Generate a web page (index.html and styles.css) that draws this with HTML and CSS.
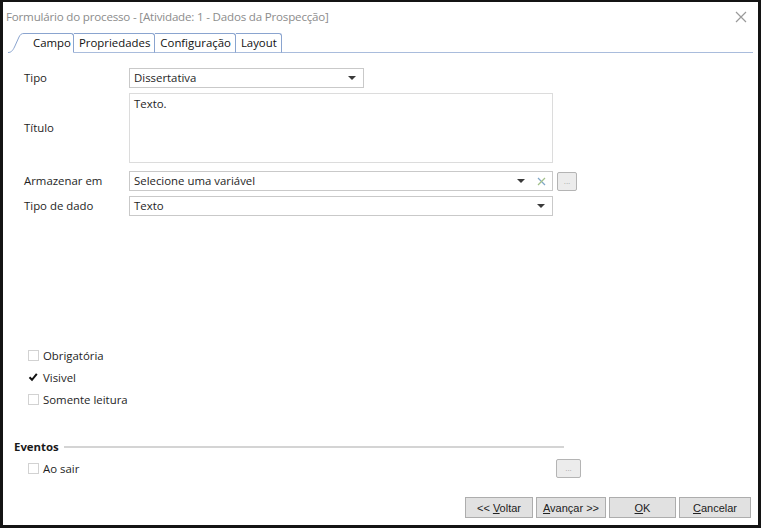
FILE: index.html
```html
<!DOCTYPE html>
<html lang="pt-BR">
<head>
    <meta charset="UTF-8">
    <meta name="viewport" content="width=device-width, initial-scale=1.0">
    <title>Formulário do processo</title>
    <link rel="stylesheet" href="styles.css">
</head>
<body>
    <div class="window">
        <div class="titlebar">
            <span class="title">Formulário do processo - [Atividade: 1 - Dados da Prospecção]</span>
            <svg class="close" width="12" height="12" viewBox="0 0 12 12">
                <path d="M1 1 L11 11 M11 1 L1 11" stroke="#9a9a9a" stroke-width="1.2" fill="none"/>
            </svg>
        </div>

        <div class="tabs">
            <svg class="tab-slant" width="16" height="20" viewBox="0 0 16 20">
                <path d="M0 19.5 C3 19.5 4.5 18 6.5 14 L11 4 C12.5 1.2 13.5 0.5 16 0.5" stroke="#8aa4cf" fill="none"/>
            </svg>
            <div class="tab active">Campo</div>
            <div class="tab">Propriedades</div>
            <div class="tab">Configuração</div>
            <div class="tab">Layout</div>
            <div class="tab-rest"></div>
        </div>

        <div class="panel">
            <div class="form">
                <label class="lbl">Tipo</label>
                <div class="field select">
                    <span>Dissertativa</span>
                    <span class="arrow"></span>
                </div>
                <span></span>

                <label class="lbl">Título</label>
                <div class="field memo">Texto.</div>
                <span></span>

                <label class="lbl spaced">Armazenar em</label>
                <div class="field select spaced">
                    <span>Selecione uma variável</span>
                    <span class="arrow"></span>
                    <svg class="clear" width="9" height="9" viewBox="0 0 9 9">
                        <path d="M1 1 L8 8" stroke="#7fa7c9" stroke-width="1.3"/>
                        <path d="M8 1 L1 8" stroke="#a3c08a" stroke-width="1.3"/>
                    </svg>
                </div>
                <button class="dots small spaced">...</button>

                <label class="lbl">Tipo de dado</label>
                <div class="field select">
                    <span>Texto</span>
                    <span class="arrow wide"></span>
                </div>
                <span></span>
            </div>

            <div class="checks">
                <div class="check"><span class="box"></span>Obrigatória</div>
                <div class="check">
                    <svg class="tick" width="10" height="10" viewBox="0 0 10 10">
                        <path d="M1.5 5.2 L4 7.8 L8.8 1.8" stroke="#111" stroke-width="2" fill="none"/>
                    </svg>Visivel
                </div>
                <div class="check"><span class="box"></span>Somente leitura</div>
            </div>

            <div class="section">
                <span class="section-title">Eventos</span>
                <span class="section-line"></span>
            </div>
            <div class="event-row">
                <div class="check"><span class="box"></span>Ao sair</div>
                <button class="dots">...</button>
            </div>

            <div class="footer">
                <button class="btn voltar">&lt;&lt; <u>V</u>oltar</button>
                <button class="btn avancar"><u>A</u>vançar &gt;&gt;</button>
                <button class="btn ok"><u>O</u>K</button>
                <button class="btn cancelar"><u>C</u>ancelar</button>
            </div>
        </div>
    </div>
</body>
</html>
```

FILE: styles.css
```css
:root {
    --frame: #141414;
    --tab-border: #8aa4cf;
    --tab-line: #a9bcdc;
    --field-border: #c9c9c9;
    --text: #1e1e1e;
    --font: 'Open Sans', 'Noto Sans', sans-serif;
}

* {
    box-sizing: border-box;
}

body {
    margin: 0;
    background: #ffffff;
    font-family: var(--font);
    font-size: 11.4px;
    color: var(--text);
}

.window {
    width: 761px;
    height: 528px;
    border: 3px solid var(--frame);
    border-top-width: 2px;
    display: flex;
    flex-direction: column;
    background: #ffffff;
}

.titlebar {
    height: 31px;
    display: flex;
    align-items: flex-start;
    justify-content: space-between;
    padding: 6px 11px 0 3px;
}

.title {
    color: #8c8c8c;
    line-height: 17px;
    font-size: 11.6px;
    letter-spacing: -0.2px;
}

.close {
    margin-top: 3px;
}

.tabs {
    display: flex;
    align-items: flex-end;
    height: 20px;
    margin: 0 5px 0 5px;
}

.tab-slant {
    display: block;
    flex: none;
}

.tab {
    height: 20px;
    padding: 0 4px 0 5px;
    border: 1px solid var(--tab-border);
    border-left: none;
    border-radius: 0 3px 0 0;
    line-height: 18px;
    color: #111;
    background: #ffffff;
    border-bottom-color: var(--tab-line);
}

.tab.active {
    padding-left: 9px;
    width: 50px;
    border-bottom-color: #ffffff;
}

.tab-rest {
    flex: 1;
    height: 20px;
    border-bottom: 1px solid var(--tab-line);
}

.panel {
    flex: 1;
    display: flex;
    flex-direction: column;
    padding: 15px 7px 0 21px;
}

.form {
    display: grid;
    grid-template-columns: 105px 424px 26px;
    row-gap: 5px;
    align-items: center;
}

.lbl {
    line-height: 16px;
}

.spaced {
    margin-top: 3px;
}

.field {
    border: 1px solid var(--field-border);
    height: 20px;
    padding: 0 4px;
    line-height: 18px;
}

.select {
    display: flex;
    align-items: center;
}

.select span:first-child {
    flex: 1;
}

.arrow {
    width: 0;
    height: 0;
    border-left: 4px solid transparent;
    border-right: 4px solid transparent;
    border-top: 4px solid #3a3a3a;
    margin-right: 3px;
}

.form .field:first-of-type {
    width: 235px;
}

.clear {
    margin: 0 2px 0 9px;
}

.memo {
    height: 70px;
    border-color: #dcdcdc;
    padding-top: 2px;
    line-height: 15px;
}

.dots {
    width: 20px;
    height: 19px;
    padding: 0;
    border: 1px solid #b4b4b4;
    border-radius: 2px;
    background: #ececec;
    color: #a0a0a0;
    font-family: 'Liberation Sans', sans-serif;
    font-size: 8px;
    line-height: 15px;
}

.form .dots {
    margin-left: 4px;
}

.checks {
    margin-top: 128px;
}

.check {
    display: flex;
    align-items: center;
    height: 22px;
    padding-left: 4px;
}

.box {
    width: 11px;
    height: 11px;
    border: 1px solid #d2d2d2;
    margin-right: 4px;
}

.tick {
    margin-right: 5px;
}

.section {
    display: flex;
    align-items: center;
    margin: 27px 0 0 -10px;
    height: 18px;
}

.section-title {
    font-weight: 700;
    color: #1a1a1a;
}

.section-line {
    width: 500px;
    height: 2px;
    margin-left: 5px;
    margin-top: 2px;
    background: #d4d4d4;
}

.event-row {
    display: flex;
    align-items: center;
    justify-content: space-between;
    width: 557px;
    margin-top: 2px;
}

.event-row .dots {
    width: 25px;
    height: 19px;
}

.footer {
    display: flex;
    justify-content: flex-end;
    gap: 3px;
    margin-top: 18px;
}

.btn {
    height: 21px;
    padding: 0;
    border: 1px solid #adadad;
    background: #e1e1e1;
    font-family: 'Liberation Sans', sans-serif;
    font-size: 11px;
    color: #222;
}

.voltar { width: 68px; }
.avancar { width: 70px; }
.ok { width: 67px; }
.cancelar { width: 72px; }
```
